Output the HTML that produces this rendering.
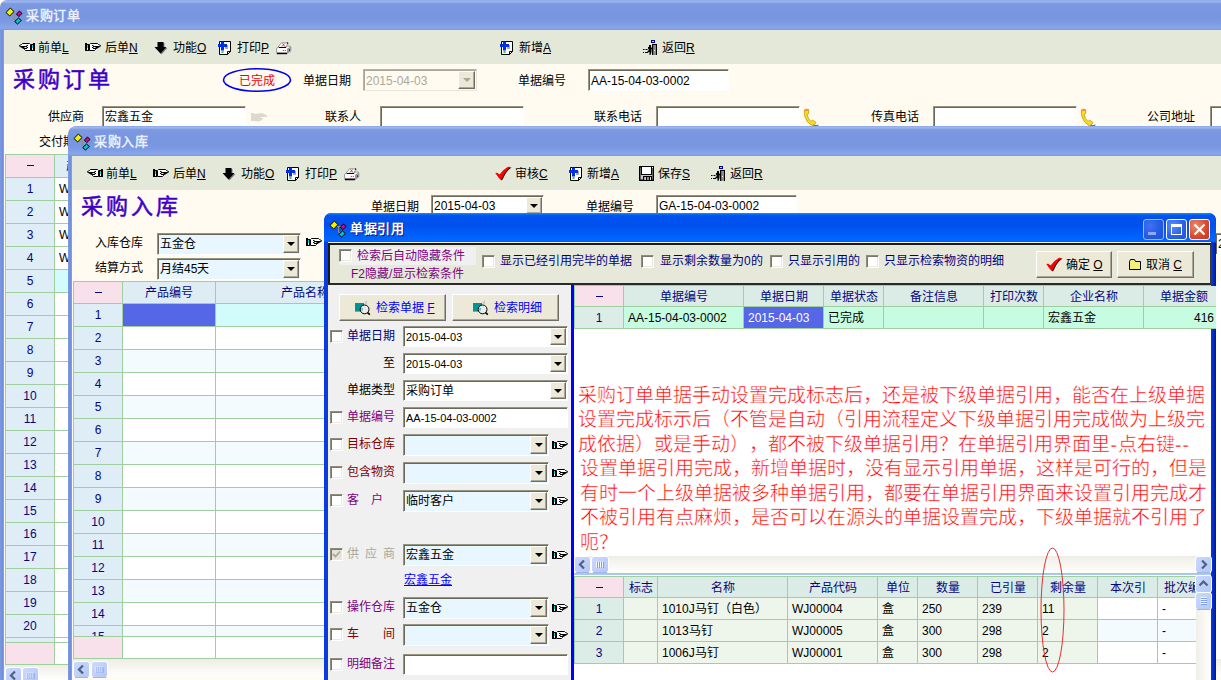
<!DOCTYPE html><html lang="zh-CN"><head><meta charset="utf-8"><title>UI</title><style>
*{box-sizing:border-box;margin:0;padding:0}
html,body{width:1221px;height:680px;overflow:hidden;background:#fffbf0}
body{position:relative;font-family:"Liberation Sans",sans-serif;font-size:12px;color:#000;line-height:14px}
.a{position:absolute}
.t{position:absolute;white-space:nowrap;line-height:14px;height:14px}
.u{text-decoration:underline}
.win{position:absolute;overflow:hidden}
.tb1{position:absolute;left:0;top:0;right:0;height:30px;background:linear-gradient(#7f9de4 0,#a3baee 1px,#98b1ea 2px,#7b98e1 4px,#7997e0 10px,#7896e0 18px,#7d9be3 23px,#84a2e8 26px,#86a5ea 28px,#7b99e2 30px)}
.ttl{position:absolute;color:#e8eefb;font-weight:bold;font-size:13px;white-space:nowrap;line-height:16px;letter-spacing:0.7px}
.tool{position:absolute;background:#e4e8d8}
.big{position:absolute;font-family:"Liberation Serif",serif;font-weight:normal;color:#3c00c8;font-size:22px;line-height:26px;white-space:nowrap;letter-spacing:3px;-webkit-text-stroke:0.5px #3c00c8}
.f{position:absolute;background:#fff;border:1px solid;border-color:#96937e #fff #fff #96937e;box-shadow:inset 1px 1px 0 #6a6859;white-space:nowrap;overflow:hidden;padding:3px 0 0 2px;line-height:14px}
.f.lb{background:#e8f6ff}
.f.dis{color:#aca899;box-shadow:inset 1px 1px 0 #a9a79a;border-color:#b5b3a5 #e8e6d8 #e8e6d8 #b5b3a5}
.dd{position:absolute;background:#ece9d8;border:1px solid;border-color:#fff #716f64 #716f64 #fff;box-shadow:inset -1px -1px 0 #aca899}
.dd:after{content:"";position:absolute;left:50%;top:50%;margin:-2px 0 0 -4px;border:4px solid transparent;border-top:4px solid #000;border-bottom:0}
.dd.dis:after{border-top-color:#aca899}
.cb{position:absolute;width:13px;height:13px;background:#fff;border:1px solid;border-color:#8f8d7c #fff #fff #8f8d7c;box-shadow:inset 1px 1px 0 #79776b,inset -1px -1px 0 #ece9d8}
.g{position:absolute;border-right:1px solid #9fcf9f;border-bottom:1px solid #9fcf9f;white-space:nowrap;overflow:hidden;line-height:14px}
.gh{background:#deedf3;color:#06067c;text-align:center}
.gn{background:#deedf6;color:#06067c;text-align:center}
.gp{background:#f8e1ea;color:#06067c;text-align:center}
.btn{position:absolute;background:#ece9d8;border:1px solid;border-color:#fff #716f64 #716f64 #fff;box-shadow:inset -1px -1px 0 #aca899}
.red{font-family:"Liberation Serif",serif;color:#ff0000;font-size:19px;line-height:24px;height:24px;font-weight:300;text-spacing-trim:space-all;-webkit-text-stroke:0.45px #fff}
.hy{display:inline-block;width:7.5px;text-align:center;font-weight:bold}
.sbtn{position:absolute;width:15px;height:17px;background:#c4d4fb;border:1px solid #fff;border-radius:3px;box-shadow:0 0 0 1px #b4c8f6 inset}
.s11{font-size:11px}
.dash{display:inline-block;width:7px;height:1px;background:#06067c;vertical-align:4px}

</style></head><body>
<div class="win" style="left:0;top:0;width:1221px;height:680px;background:#fffbf0">
<div class="tb1" style="border-top-left-radius:7px"></div>
<svg class="a" style="left:5px;top:7px" width="18" height="18" viewBox="0 0 18 18"><path d="M8 6.5 L12 6.5 M9.5 6.5 L9.5 12.5 L11.5 12.5" fill="none" stroke="#8c8c8c" stroke-width="1"/><path d="M1 5.5 L5.3 1 L9 4.5 L4.7 9 Z" fill="#f4f000" stroke="#000" stroke-width="1"/><path d="M11.4 7 L14.5 4 L17 6.5 L13.8 9.6 Z" fill="#e0008c" stroke="#000" stroke-width="1"/><path d="M9.7 14.5 L13.5 11 L16.4 13.5 L12.5 17 Z" fill="#00c8c8" stroke="#000" stroke-width="1"/></svg>
<div class="ttl" style="left:26px;top:8px">采购订单</div>
<div class="a" style="left:0px;top:30px;width:4px;height:650px;background:linear-gradient(90deg,#7d9be3,#6f8ddb 60%,#8aa4e6);"></div>
<div class="tool" style="left:4px;top:30px;width:1217px;height:34px"></div>
<svg class="a" style="left:18px;top:43px" width="17" height="9" viewBox="0 0 17 9"><g transform="translate(17,0) scale(-1,1)"><rect x="0" y="0" width="2" height="8" fill="#000"/><rect x="2" y="1" width="2" height="7" fill="#000"/><rect x="2" y="2" width="1" height="3" fill="#00e0f0"/><rect x="2" y="5" width="1" height="2" fill="#f4e8e8"/><path d="M4.5 1.5 L5.5 0.5 L12.5 0.5 L13.5 1.5 L15.5 2.5 L15.5 3.2 L13 4.5 L11.5 5.5 L10.5 6.5 L9.5 7.5 L4.5 7.5 Z" fill="#fff" stroke="#000" stroke-width="1"/><path d="M7 2.5 L8.5 2.5 M8 3.5 L14.5 3.5 M7 4.5 L8.5 4.5 M10.5 4.5 L13 4.5 M8 5.5 L11.5 5.5" fill="none" stroke="#000" stroke-width="1"/></g></svg>
<div class="t" style="left:38px;top:41px;">前单<span class="u">L</span></div>
<svg class="a" style="left:85px;top:43px" width="17" height="9" viewBox="0 0 17 9"><rect x="0" y="0" width="2" height="8" fill="#000"/><rect x="2" y="1" width="2" height="7" fill="#000"/><rect x="2" y="2" width="1" height="3" fill="#00e0f0"/><rect x="2" y="5" width="1" height="2" fill="#f4e8e8"/><path d="M4.5 1.5 L5.5 0.5 L12.5 0.5 L13.5 1.5 L15.5 2.5 L15.5 3.2 L13 4.5 L11.5 5.5 L10.5 6.5 L9.5 7.5 L4.5 7.5 Z" fill="#fff" stroke="#000" stroke-width="1"/><path d="M7 2.5 L8.5 2.5 M8 3.5 L14.5 3.5 M7 4.5 L8.5 4.5 M10.5 4.5 L13 4.5 M8 5.5 L11.5 5.5" fill="none" stroke="#000" stroke-width="1"/></svg>
<div class="t" style="left:105px;top:41px;">后单<span class="u">N</span></div>
<svg class="a" style="left:154px;top:42px" width="14" height="13" viewBox="0 0 14 13"><path d="M3.5 0 L9.5 0 L9.5 5 L12.5 5 L6.5 11.5 L0.5 5 L3.5 5 Z" fill="#808080" transform="translate(1,1)"/><path d="M3.5 0 L9.5 0 L9.5 5 L12.5 5 L6.5 11.5 L0.5 5 L3.5 5 Z" fill="#000"/></svg>
<div class="t" style="left:173px;top:41px;">功能<span class="u">O</span></div>
<svg class="a" style="left:218px;top:40px" width="14" height="16" viewBox="-1 0 14 16"><path d="M0.5 1.5 L11.5 1.5 L11.5 11.5 L8.5 14.5 L0.5 14.5 Z" fill="#fff" stroke="#000" stroke-width="1"/><path d="M8.5 14.5 L8.5 11.5 L11.5 11.5" fill="none" stroke="#000" stroke-width="1"/><rect x="6" y="5" width="3" height="4" fill="#a8a8a8"/><rect x="-1" y="4" width="9" height="3" fill="#0030e0"/><rect x="2" y="1.5" width="3" height="9" fill="#0030e0"/><rect x="2.5" y="11" width="2" height="2" fill="#30d030"/></svg>
<div class="t" style="left:237px;top:41px;">打印<span class="u">P</span></div>
<svg class="a" style="left:276px;top:42px" width="16" height="13" viewBox="0 0 16 13"><path d="M0.5 6.5 L3 4.6 L14 4 L14.8 5 L14.8 9 L11 11.5 L0.8 11.5 Z" fill="#fff" stroke="#808080" stroke-width="0.8"/><path d="M11 6.8 L14.8 4.6 L14.8 9 L11 11.5 Z" fill="#9a9a9a"/><path d="M1.8 5.4 L5.5 0.8 L11.5 0.8 L11.5 2 L9.8 5.4 Z" fill="#fff" stroke="#808080" stroke-width="0.8"/><path d="M11 0.8 L11.8 0.8 L11.8 2" stroke="#000" stroke-width="0.9" fill="none"/><path d="M5.8 4.6 L8.6 1.6 M6.6 1.6 L9 4.6" stroke="#e02020" stroke-width="0.9"/><path d="M3 5.5 L10.2 5.5" stroke="#000" stroke-width="1"/><path d="M1 11.4 L11 11.4" stroke="#000" stroke-width="1.6"/><rect x="6.8" y="8" width="1" height="1" fill="#f01010"/><rect x="8.8" y="8" width="1" height="1" fill="#f01010"/><rect x="13" y="7.5" width="1" height="1.2" fill="#000"/></svg>
<svg class="a" style="left:500px;top:40px" width="14" height="16" viewBox="-1 0 14 16"><path d="M0.5 1.5 L11.5 1.5 L11.5 11.5 L8.5 14.5 L0.5 14.5 Z" fill="#fff" stroke="#000" stroke-width="1"/><path d="M8.5 14.5 L8.5 11.5 L11.5 11.5" fill="none" stroke="#000" stroke-width="1"/><rect x="6" y="5" width="3" height="4" fill="#a8a8a8"/><rect x="-1" y="4" width="9" height="3" fill="#0030e0"/><rect x="2" y="1.5" width="3" height="9" fill="#0030e0"/><rect x="2.5" y="11" width="2" height="2" fill="#30d030"/></svg>
<div class="t" style="left:519px;top:41px;">新增<span class="u">A</span></div>
<svg class="a" style="left:643px;top:40px" width="15" height="16" viewBox="0 0 15 16"><rect x="8" y="0" width="4" height="3" fill="#000090"/><rect x="9" y="1" width="2" height="1" fill="#c8c8e8"/><rect x="9" y="4" width="5" height="11" fill="#000"/><rect x="10.2" y="5" width="2.8" height="10" fill="#8c8c8c"/><rect x="11" y="10" width="1" height="1" fill="#fff"/><rect x="6" y="5" width="2" height="2" fill="#000"/><path d="M5 7 L8.5 7 L8.5 12 L7.6 14.8 L6.4 14.8 L6.5 12 L4.5 12.6 L4.5 11 L6 10 L5 8.5 Z" fill="#000"/><rect x="8" y="8" width="2" height="1.2" fill="#000"/><rect x="0" y="9" width="1.5" height="1" fill="#000"/><rect x="2.5" y="9" width="2" height="1" fill="#000"/><rect x="0" y="12" width="1" height="1" fill="#000"/><rect x="2" y="12" width="3" height="1" fill="#000"/></svg>
<div class="t" style="left:662px;top:41px;">返回<span class="u">R</span></div>
<div class="big" style="left:13px;top:67px">采购订单</div>
<svg class="a" style="left:221px;top:67px" width="72" height="26" viewBox="0 0 72 26"><ellipse cx="36" cy="13" rx="33.5" ry="11.2" fill="none" stroke="#0000ee" stroke-width="1.6"/></svg>
<div class="t" style="left:239px;top:74px;color:#f00000">已完成</div>
<div class="t" style="left:303px;top:74px;">单据日期</div>
<div class="f dis" style="left:363px;top:69px;width:114px;height:22px;background:#fffbf0;padding-top:4px">2015-04-03</div>
<div class="dd dis" style="left:458px;top:71px;width:17px;height:18px"></div>
<div class="t" style="left:518px;top:74px;">单据编号</div>
<div class="f " style="left:588px;top:69px;width:141px;height:22px;padding-top:4px">AA-15-04-03-0002</div>
<div class="t" style="left:48px;top:110px;">供应商</div>
<div class="f " style="left:102px;top:106px;width:144px;height:22px;">宏鑫五金</div>
<svg class="a" style="left:250px;top:112px" width="18" height="11" viewBox="0 0 18 11"><path d="M1 1 L4 1 L4 2 L12 1 L17 3.5 L17 5 L11 5 L11 6 L13 6 L12 8 L9 9.5 L4 9 L1 9 Z" fill="#dcdad0"/></svg>
<div class="t" style="left:325px;top:110px;">联系人</div>
<div class="f " style="left:380px;top:106px;width:144px;height:22px;"></div>
<div class="t" style="left:594px;top:110px;">联系电话</div>
<div class="f " style="left:656px;top:106px;width:144px;height:22px;"></div>
<svg class="a" style="left:803px;top:108px" width="19" height="19" viewBox="0 0 19 19"><path d="M10 17.5 L15 17.5 L15 16.5" stroke="#707070" stroke-width="1" fill="none"/><path d="M1.5 2 Q3 0.8 5.5 1.5 L5.8 5.5 L4 6.5 Q5 11 8 13.5 L9.5 12 L13 14.5 Q12 17.5 9 17.5 Q4 15 2 9 Q1 5 1.5 2 Z" fill="#ffdc10" stroke="#b89828" stroke-width="0.8"/><path d="M1.5 2 Q3 0.8 5.5 1.5 L5.5 2.6 L1.6 3 Z" fill="#ff8030"/></svg>
<div class="t" style="left:871px;top:110px;">传真电话</div>
<div class="f " style="left:933px;top:106px;width:144px;height:22px;"></div>
<svg class="a" style="left:1080px;top:108px" width="19" height="19" viewBox="0 0 19 19"><path d="M10 17.5 L15 17.5 L15 16.5" stroke="#707070" stroke-width="1" fill="none"/><path d="M1.5 2 Q3 0.8 5.5 1.5 L5.8 5.5 L4 6.5 Q5 11 8 13.5 L9.5 12 L13 14.5 Q12 17.5 9 17.5 Q4 15 2 9 Q1 5 1.5 2 Z" fill="#ffdc10" stroke="#b89828" stroke-width="0.8"/><path d="M1.5 2 Q3 0.8 5.5 1.5 L5.5 2.6 L1.6 3 Z" fill="#ff8030"/></svg>
<div class="t" style="left:1147px;top:110px;">公司地址</div>
<div class="f " style="left:1210px;top:106px;width:30px;height:22px;"></div>
<div class="t" style="left:39px;top:135px;">交付期</div>
<div class="a" style="left:5px;top:154px;width:70px;height:511px;background:#9fcf9f;"></div>
<div class="g gp" style="left:6px;top:155px;width:49px;height:23px;padding-top:4px"><span class="dash"></span></div>
<div class="g gh" style="left:55px;top:155px;width:40px;height:23px;padding-top:4px;text-align:left;padding-left:11px">产</div>
<div class="g gn" style="left:6px;top:178px;width:49px;height:23px;padding-top:4px">1</div>
<div class="g " style="left:55px;top:178px;width:40px;height:23px;background:#fff;padding:4px 0 0 4px">W</div>
<div class="g gn" style="left:6px;top:201px;width:49px;height:23px;padding-top:4px">2</div>
<div class="g " style="left:55px;top:201px;width:40px;height:23px;background:#fff;padding:4px 0 0 4px">W</div>
<div class="g gn" style="left:6px;top:224px;width:49px;height:23px;padding-top:4px">3</div>
<div class="g " style="left:55px;top:224px;width:40px;height:23px;background:#fff;padding:4px 0 0 4px">W</div>
<div class="g gn" style="left:6px;top:247px;width:49px;height:23px;padding-top:4px">4</div>
<div class="g " style="left:55px;top:247px;width:40px;height:23px;background:#fff;padding:4px 0 0 4px">W</div>
<div class="g gn" style="left:6px;top:270px;width:49px;height:23px;padding-top:4px">5</div>
<div class="g " style="left:55px;top:270px;width:40px;height:23px;background:#d2fbfc;padding:4px 0 0 4px"></div>
<div class="g gn" style="left:6px;top:293px;width:49px;height:23px;padding-top:4px">6</div>
<div class="g " style="left:55px;top:293px;width:40px;height:23px;background:#fff;padding:4px 0 0 4px"></div>
<div class="g gn" style="left:6px;top:316px;width:49px;height:23px;padding-top:4px">7</div>
<div class="g " style="left:55px;top:316px;width:40px;height:23px;background:#fff;padding:4px 0 0 4px"></div>
<div class="g gn" style="left:6px;top:339px;width:49px;height:23px;padding-top:4px">8</div>
<div class="g " style="left:55px;top:339px;width:40px;height:23px;background:#fff;padding:4px 0 0 4px"></div>
<div class="g gn" style="left:6px;top:362px;width:49px;height:23px;padding-top:4px">9</div>
<div class="g " style="left:55px;top:362px;width:40px;height:23px;background:#fff;padding:4px 0 0 4px"></div>
<div class="g gn" style="left:6px;top:385px;width:49px;height:23px;padding-top:4px">10</div>
<div class="g " style="left:55px;top:385px;width:40px;height:23px;background:#fff;padding:4px 0 0 4px"></div>
<div class="g gn" style="left:6px;top:408px;width:49px;height:23px;padding-top:4px">11</div>
<div class="g " style="left:55px;top:408px;width:40px;height:23px;background:#fff;padding:4px 0 0 4px"></div>
<div class="g gn" style="left:6px;top:431px;width:49px;height:23px;padding-top:4px">12</div>
<div class="g " style="left:55px;top:431px;width:40px;height:23px;background:#fff;padding:4px 0 0 4px"></div>
<div class="g gn" style="left:6px;top:454px;width:49px;height:23px;padding-top:4px">13</div>
<div class="g " style="left:55px;top:454px;width:40px;height:23px;background:#fff;padding:4px 0 0 4px"></div>
<div class="g gn" style="left:6px;top:477px;width:49px;height:23px;padding-top:4px">14</div>
<div class="g " style="left:55px;top:477px;width:40px;height:23px;background:#fff;padding:4px 0 0 4px"></div>
<div class="g gn" style="left:6px;top:500px;width:49px;height:23px;padding-top:4px">15</div>
<div class="g " style="left:55px;top:500px;width:40px;height:23px;background:#fff;padding:4px 0 0 4px"></div>
<div class="g gn" style="left:6px;top:523px;width:49px;height:23px;padding-top:4px">16</div>
<div class="g " style="left:55px;top:523px;width:40px;height:23px;background:#fff;padding:4px 0 0 4px"></div>
<div class="g gn" style="left:6px;top:546px;width:49px;height:23px;padding-top:4px">17</div>
<div class="g " style="left:55px;top:546px;width:40px;height:23px;background:#fff;padding:4px 0 0 4px"></div>
<div class="g gn" style="left:6px;top:569px;width:49px;height:23px;padding-top:4px">18</div>
<div class="g " style="left:55px;top:569px;width:40px;height:23px;background:#fff;padding:4px 0 0 4px"></div>
<div class="g gn" style="left:6px;top:592px;width:49px;height:23px;padding-top:4px">19</div>
<div class="g " style="left:55px;top:592px;width:40px;height:23px;background:#fff;padding:4px 0 0 4px"></div>
<div class="g gn" style="left:6px;top:615px;width:49px;height:23px;padding-top:4px">20</div>
<div class="g " style="left:55px;top:615px;width:40px;height:23px;background:#fff;padding:4px 0 0 4px"></div>
<div class="g gn" style="left:6px;top:638px;width:49px;height:5px;"></div>
<div class="g " style="left:55px;top:638px;width:40px;height:5px;background:#fff"></div>
<div class="g gp" style="left:6px;top:643px;width:49px;height:22px;"></div>
<div class="g " style="left:55px;top:643px;width:40px;height:22px;background:#fff"></div>
<div class="a" style="left:4px;top:665px;width:70px;height:15px;background:linear-gradient(#eeede5,#f6f5f0 40%,#fefefb);"></div>
<svg class="a" style="left:5px;top:667px" width="17" height="17" viewBox="0 0 17 17"><defs><linearGradient id="sg" x1="0" y1="0" x2="1" y2="1"><stop offset="0" stop-color="#cddafd"/><stop offset="1" stop-color="#b4c6f5"/></linearGradient></defs><rect x="0.5" y="0.5" width="16" height="16" rx="2.5" fill="url(#sg)" stroke="#fff" stroke-width="1"/><path d="M2 16.5 L15 16.5" stroke="#a0b5ee" stroke-width="1"/><path d="M10.0 4.5 L6.0 8.5 L10.0 12.5" fill="none" stroke="#4d6185" stroke-width="2.2"/></svg>
<svg class="a" style="left:22px;top:667px" width="17" height="17" viewBox="0 0 17 17"><defs><linearGradient id="sg" x1="0" y1="0" x2="1" y2="1"><stop offset="0" stop-color="#cddafd"/><stop offset="1" stop-color="#b4c6f5"/></linearGradient></defs><rect x="0.5" y="0.5" width="16" height="16" rx="2.5" fill="url(#sg)" stroke="#fff" stroke-width="1"/><path d="M2 16.5 L15 16.5" stroke="#a0b5ee" stroke-width="1"/><rect x="4.5" y="5.5" width="1" height="6" fill="#f4f8ff"/><rect x="5.5" y="6.0" width="1" height="6" fill="#7c9eec"/><rect x="6.5" y="5.5" width="1" height="6" fill="#f4f8ff"/><rect x="7.5" y="6.0" width="1" height="6" fill="#7c9eec"/><rect x="8.5" y="5.5" width="1" height="6" fill="#f4f8ff"/><rect x="9.5" y="6.0" width="1" height="6" fill="#7c9eec"/><rect x="10.5" y="5.5" width="1" height="6" fill="#f4f8ff"/><rect x="11.5" y="6.0" width="1" height="6" fill="#7c9eec"/></svg>
</div>
<div class="win" style="left:68px;top:126px;width:1160px;height:560px;background:#fffbf0;border-top-left-radius:8px">
<div class="tb1" style="border-top-left-radius:7px"></div>
<svg class="a" style="left:5px;top:7px" width="18" height="18" viewBox="0 0 18 18"><path d="M8 6.5 L12 6.5 M9.5 6.5 L9.5 12.5 L11.5 12.5" fill="none" stroke="#8c8c8c" stroke-width="1"/><path d="M1 5.5 L5.3 1 L9 4.5 L4.7 9 Z" fill="#f4f000" stroke="#000" stroke-width="1"/><path d="M11.4 7 L14.5 4 L17 6.5 L13.8 9.6 Z" fill="#e0008c" stroke="#000" stroke-width="1"/><path d="M9.7 14.5 L13.5 11 L16.4 13.5 L12.5 17 Z" fill="#00c8c8" stroke="#000" stroke-width="1"/></svg>
<div class="ttl" style="left:26px;top:8px">采购入库</div>
<div class="a" style="left:0px;top:30px;width:4px;height:650px;background:linear-gradient(90deg,#7d9be3,#6f8ddb 60%,#8aa4e6);"></div>
<div class="tool" style="left:4px;top:30px;width:1217px;height:34px"></div>
<svg class="a" style="left:18px;top:43px" width="17" height="9" viewBox="0 0 17 9"><g transform="translate(17,0) scale(-1,1)"><rect x="0" y="0" width="2" height="8" fill="#000"/><rect x="2" y="1" width="2" height="7" fill="#000"/><rect x="2" y="2" width="1" height="3" fill="#00e0f0"/><rect x="2" y="5" width="1" height="2" fill="#f4e8e8"/><path d="M4.5 1.5 L5.5 0.5 L12.5 0.5 L13.5 1.5 L15.5 2.5 L15.5 3.2 L13 4.5 L11.5 5.5 L10.5 6.5 L9.5 7.5 L4.5 7.5 Z" fill="#fff" stroke="#000" stroke-width="1"/><path d="M7 2.5 L8.5 2.5 M8 3.5 L14.5 3.5 M7 4.5 L8.5 4.5 M10.5 4.5 L13 4.5 M8 5.5 L11.5 5.5" fill="none" stroke="#000" stroke-width="1"/></g></svg>
<div class="t" style="left:38px;top:41px;">前单<span class="u">L</span></div>
<svg class="a" style="left:85px;top:43px" width="17" height="9" viewBox="0 0 17 9"><rect x="0" y="0" width="2" height="8" fill="#000"/><rect x="2" y="1" width="2" height="7" fill="#000"/><rect x="2" y="2" width="1" height="3" fill="#00e0f0"/><rect x="2" y="5" width="1" height="2" fill="#f4e8e8"/><path d="M4.5 1.5 L5.5 0.5 L12.5 0.5 L13.5 1.5 L15.5 2.5 L15.5 3.2 L13 4.5 L11.5 5.5 L10.5 6.5 L9.5 7.5 L4.5 7.5 Z" fill="#fff" stroke="#000" stroke-width="1"/><path d="M7 2.5 L8.5 2.5 M8 3.5 L14.5 3.5 M7 4.5 L8.5 4.5 M10.5 4.5 L13 4.5 M8 5.5 L11.5 5.5" fill="none" stroke="#000" stroke-width="1"/></svg>
<div class="t" style="left:105px;top:41px;">后单<span class="u">N</span></div>
<svg class="a" style="left:154px;top:42px" width="14" height="13" viewBox="0 0 14 13"><path d="M3.5 0 L9.5 0 L9.5 5 L12.5 5 L6.5 11.5 L0.5 5 L3.5 5 Z" fill="#808080" transform="translate(1,1)"/><path d="M3.5 0 L9.5 0 L9.5 5 L12.5 5 L6.5 11.5 L0.5 5 L3.5 5 Z" fill="#000"/></svg>
<div class="t" style="left:173px;top:41px;">功能<span class="u">O</span></div>
<svg class="a" style="left:218px;top:40px" width="14" height="16" viewBox="-1 0 14 16"><path d="M0.5 1.5 L11.5 1.5 L11.5 11.5 L8.5 14.5 L0.5 14.5 Z" fill="#fff" stroke="#000" stroke-width="1"/><path d="M8.5 14.5 L8.5 11.5 L11.5 11.5" fill="none" stroke="#000" stroke-width="1"/><rect x="6" y="5" width="3" height="4" fill="#a8a8a8"/><rect x="-1" y="4" width="9" height="3" fill="#0030e0"/><rect x="2" y="1.5" width="3" height="9" fill="#0030e0"/><rect x="2.5" y="11" width="2" height="2" fill="#30d030"/></svg>
<div class="t" style="left:237px;top:41px;">打印<span class="u">P</span></div>
<svg class="a" style="left:276px;top:42px" width="16" height="13" viewBox="0 0 16 13"><path d="M0.5 6.5 L3 4.6 L14 4 L14.8 5 L14.8 9 L11 11.5 L0.8 11.5 Z" fill="#fff" stroke="#808080" stroke-width="0.8"/><path d="M11 6.8 L14.8 4.6 L14.8 9 L11 11.5 Z" fill="#9a9a9a"/><path d="M1.8 5.4 L5.5 0.8 L11.5 0.8 L11.5 2 L9.8 5.4 Z" fill="#fff" stroke="#808080" stroke-width="0.8"/><path d="M11 0.8 L11.8 0.8 L11.8 2" stroke="#000" stroke-width="0.9" fill="none"/><path d="M5.8 4.6 L8.6 1.6 M6.6 1.6 L9 4.6" stroke="#e02020" stroke-width="0.9"/><path d="M3 5.5 L10.2 5.5" stroke="#000" stroke-width="1"/><path d="M1 11.4 L11 11.4" stroke="#000" stroke-width="1.6"/><rect x="6.8" y="8" width="1" height="1" fill="#f01010"/><rect x="8.8" y="8" width="1" height="1" fill="#f01010"/><rect x="13" y="7.5" width="1" height="1.2" fill="#000"/></svg>
<svg class="a" style="left:427px;top:40px" width="17" height="16" viewBox="0 0 17 16"><path d="M0.2 7 L2 6.8 L4.5 8.6 L8.5 4 L13 0.8 L15.8 1 L12.5 3.5 L9.5 7.5 L7 12.5 L6 14 L3.5 11.5 L1.5 8.5 Z" fill="#000" transform="translate(0.8,0.6)"/><path d="M0.2 7 L2 6.8 L4.5 8.6 L8.5 4 L13 0.8 L15.8 1 L12.5 3.5 L9.5 7.5 L7 12.5 L6 14 L3.5 11.5 L1.5 8.5 Z" fill="#ff0000"/></svg>
<div class="t" style="left:447px;top:41px;">审核<span class="u">C</span></div>
<svg class="a" style="left:501px;top:40px" width="14" height="16" viewBox="-1 0 14 16"><path d="M0.5 1.5 L11.5 1.5 L11.5 11.5 L8.5 14.5 L0.5 14.5 Z" fill="#fff" stroke="#000" stroke-width="1"/><path d="M8.5 14.5 L8.5 11.5 L11.5 11.5" fill="none" stroke="#000" stroke-width="1"/><rect x="6" y="5" width="3" height="4" fill="#a8a8a8"/><rect x="-1" y="4" width="9" height="3" fill="#0030e0"/><rect x="2" y="1.5" width="3" height="9" fill="#0030e0"/><rect x="2.5" y="11" width="2" height="2" fill="#30d030"/></svg>
<div class="t" style="left:519px;top:41px;">新增<span class="u">A</span></div>
<svg class="a" style="left:571px;top:40px" width="15" height="15" viewBox="0 0 15 15"><rect x="0.75" y="0.75" width="13.5" height="13.5" fill="#c8c8c8" stroke="#000" stroke-width="1.5"/><rect x="2.5" y="0.5" width="10" height="8" fill="#fff" stroke="#000" stroke-width="1"/><rect x="4" y="10" width="9" height="4.5" fill="#000"/><rect x="5.3" y="11" width="1.6" height="3" fill="#e0e0e0"/><rect x="8" y="11" width="2" height="3" fill="#909090"/><rect x="11" y="11" width="1" height="3" fill="#e0e0e0"/><rect x="13" y="1" width="1" height="1" fill="#fff"/></svg>
<div class="t" style="left:590px;top:41px;">保存<span class="u">S</span></div>
<svg class="a" style="left:643px;top:40px" width="15" height="16" viewBox="0 0 15 16"><rect x="8" y="0" width="4" height="3" fill="#000090"/><rect x="9" y="1" width="2" height="1" fill="#c8c8e8"/><rect x="9" y="4" width="5" height="11" fill="#000"/><rect x="10.2" y="5" width="2.8" height="10" fill="#8c8c8c"/><rect x="11" y="10" width="1" height="1" fill="#fff"/><rect x="6" y="5" width="2" height="2" fill="#000"/><path d="M5 7 L8.5 7 L8.5 12 L7.6 14.8 L6.4 14.8 L6.5 12 L4.5 12.6 L4.5 11 L6 10 L5 8.5 Z" fill="#000"/><rect x="8" y="8" width="2" height="1.2" fill="#000"/><rect x="0" y="9" width="1.5" height="1" fill="#000"/><rect x="2.5" y="9" width="2" height="1" fill="#000"/><rect x="0" y="12" width="1" height="1" fill="#000"/><rect x="2" y="12" width="3" height="1" fill="#000"/></svg>
<div class="t" style="left:662px;top:41px;">返回<span class="u">R</span></div>
<div class="big" style="left:13px;top:68px">采购入库</div>
<div class="t" style="left:303px;top:74px;">单据日期</div>
<div class="f " style="left:363px;top:69px;width:113px;height:21px;">2015-04-03</div>
<div class="dd " style="left:458px;top:71px;width:16px;height:17px"></div>
<div class="t" style="left:518px;top:74px;">单据编号</div>
<div class="f " style="left:588px;top:69px;width:141px;height:21px;">GA-15-04-03-0002</div>
<div class="t" style="left:27px;top:110px;">入库仓库</div>
<div class="f lb" style="left:89px;top:107px;width:144px;height:22px;">五金仓</div>
<div class="dd " style="left:215px;top:109px;width:16px;height:18px"></div>
<svg class="a" style="left:238px;top:112px" width="17" height="9" viewBox="0 0 17 9"><rect x="0" y="0" width="2" height="8" fill="#000"/><rect x="2" y="1" width="2" height="7" fill="#000"/><rect x="2" y="2" width="1" height="3" fill="#00e0f0"/><rect x="2" y="5" width="1" height="2" fill="#f4e8e8"/><path d="M4.5 1.5 L5.5 0.5 L12.5 0.5 L13.5 1.5 L15.5 2.5 L15.5 3.2 L13 4.5 L11.5 5.5 L10.5 6.5 L9.5 7.5 L4.5 7.5 Z" fill="#fff" stroke="#000" stroke-width="1"/><path d="M7 2.5 L8.5 2.5 M8 3.5 L14.5 3.5 M7 4.5 L8.5 4.5 M10.5 4.5 L13 4.5 M8 5.5 L11.5 5.5" fill="none" stroke="#000" stroke-width="1"/></svg>
<div class="t" style="left:27px;top:135px;">结算方式</div>
<div class="f lb" style="left:89px;top:132px;width:144px;height:22px;">月结45天</div>
<div class="dd " style="left:215px;top:134px;width:16px;height:18px"></div>
<div class="f " style="left:1147px;top:107px;width:40px;height:22px;">2</div>
<div class="a" style="left:5px;top:155px;width:1200px;height:378px;background:#fff;"></div>
<div class="a" style="left:5px;top:155px;width:444px;height:378px;background:#9fcf9f;"></div>
<div class="g gp" style="left:6px;top:156px;width:49px;height:22px;padding-top:4px"><span class="dash"></span></div>
<div class="g gh" style="left:55px;top:156px;width:93px;height:22px;padding-top:4px">产品编号</div>
<div class="g gh" style="left:148px;top:156px;width:300px;height:22px;padding-top:4px;text-align:left;padding-left:65px">产品名称</div>
<div class="g gn" style="left:6px;top:178px;width:49px;height:23px;padding-top:4px">1</div>
<div class="g " style="left:55px;top:178px;width:93px;height:23px;background:#5566e6"></div>
<div class="g " style="left:148px;top:178px;width:300px;height:23px;background:#d2fbfc"></div>
<div class="g gn" style="left:6px;top:201px;width:49px;height:23px;padding-top:4px">2</div>
<div class="g " style="left:55px;top:201px;width:93px;height:23px;background:#fff"></div>
<div class="g " style="left:148px;top:201px;width:300px;height:23px;background:#fff"></div>
<div class="g gn" style="left:6px;top:224px;width:49px;height:23px;padding-top:4px">3</div>
<div class="g " style="left:55px;top:224px;width:93px;height:23px;background:#f4fbfe"></div>
<div class="g " style="left:148px;top:224px;width:300px;height:23px;background:#f4fbfe"></div>
<div class="g gn" style="left:6px;top:247px;width:49px;height:23px;padding-top:4px">4</div>
<div class="g " style="left:55px;top:247px;width:93px;height:23px;background:#fff"></div>
<div class="g " style="left:148px;top:247px;width:300px;height:23px;background:#fff"></div>
<div class="g gn" style="left:6px;top:270px;width:49px;height:23px;padding-top:4px">5</div>
<div class="g " style="left:55px;top:270px;width:93px;height:23px;background:#f4fbfe"></div>
<div class="g " style="left:148px;top:270px;width:300px;height:23px;background:#f4fbfe"></div>
<div class="g gn" style="left:6px;top:293px;width:49px;height:23px;padding-top:4px">6</div>
<div class="g " style="left:55px;top:293px;width:93px;height:23px;background:#fff"></div>
<div class="g " style="left:148px;top:293px;width:300px;height:23px;background:#fff"></div>
<div class="g gn" style="left:6px;top:316px;width:49px;height:23px;padding-top:4px">7</div>
<div class="g " style="left:55px;top:316px;width:93px;height:23px;background:#f4fbfe"></div>
<div class="g " style="left:148px;top:316px;width:300px;height:23px;background:#f4fbfe"></div>
<div class="g gn" style="left:6px;top:339px;width:49px;height:23px;padding-top:4px">8</div>
<div class="g " style="left:55px;top:339px;width:93px;height:23px;background:#fff"></div>
<div class="g " style="left:148px;top:339px;width:300px;height:23px;background:#fff"></div>
<div class="g gn" style="left:6px;top:362px;width:49px;height:23px;padding-top:4px">9</div>
<div class="g " style="left:55px;top:362px;width:93px;height:23px;background:#f4fbfe"></div>
<div class="g " style="left:148px;top:362px;width:300px;height:23px;background:#f4fbfe"></div>
<div class="g gn" style="left:6px;top:385px;width:49px;height:23px;padding-top:4px">10</div>
<div class="g " style="left:55px;top:385px;width:93px;height:23px;background:#fff"></div>
<div class="g " style="left:148px;top:385px;width:300px;height:23px;background:#fff"></div>
<div class="g gn" style="left:6px;top:408px;width:49px;height:23px;padding-top:4px">11</div>
<div class="g " style="left:55px;top:408px;width:93px;height:23px;background:#f4fbfe"></div>
<div class="g " style="left:148px;top:408px;width:300px;height:23px;background:#f4fbfe"></div>
<div class="g gn" style="left:6px;top:431px;width:49px;height:23px;padding-top:4px">12</div>
<div class="g " style="left:55px;top:431px;width:93px;height:23px;background:#fff"></div>
<div class="g " style="left:148px;top:431px;width:300px;height:23px;background:#fff"></div>
<div class="g gn" style="left:6px;top:454px;width:49px;height:23px;padding-top:4px">13</div>
<div class="g " style="left:55px;top:454px;width:93px;height:23px;background:#f4fbfe"></div>
<div class="g " style="left:148px;top:454px;width:300px;height:23px;background:#f4fbfe"></div>
<div class="g gn" style="left:6px;top:477px;width:49px;height:23px;padding-top:4px">14</div>
<div class="g " style="left:55px;top:477px;width:93px;height:23px;background:#fff"></div>
<div class="g " style="left:148px;top:477px;width:300px;height:23px;background:#fff"></div>
<div class="g gn" style="left:6px;top:500px;width:49px;height:23px;padding-top:4px">15</div>
<div class="g " style="left:55px;top:500px;width:93px;height:23px;background:#f4fbfe"></div>
<div class="g " style="left:148px;top:500px;width:300px;height:23px;background:#f4fbfe"></div>
<div class="g gp" style="left:6px;top:510px;width:49px;height:23px;border-top:1px solid #9fcf9f"></div>
<div class="g " style="left:55px;top:510px;width:93px;height:23px;background:#fff;border-top:1px solid #9fcf9f"></div>
<div class="g " style="left:148px;top:510px;width:300px;height:23px;background:#fff;border-top:1px solid #9fcf9f"></div>
<div class="a" style="left:4px;top:533px;width:1200px;height:18px;background:linear-gradient(#eeede5,#f6f5f0 8px,#fefefb 17px);"></div>
<svg class="a" style="left:5px;top:535px" width="17" height="17" viewBox="0 0 17 17"><defs><linearGradient id="sg" x1="0" y1="0" x2="1" y2="1"><stop offset="0" stop-color="#cddafd"/><stop offset="1" stop-color="#b4c6f5"/></linearGradient></defs><rect x="0.5" y="0.5" width="16" height="16" rx="2.5" fill="url(#sg)" stroke="#fff" stroke-width="1"/><path d="M2 16.5 L15 16.5" stroke="#a0b5ee" stroke-width="1"/><path d="M10.0 4.5 L6.0 8.5 L10.0 12.5" fill="none" stroke="#4d6185" stroke-width="2.2"/></svg>
<svg class="a" style="left:23px;top:535px" width="17" height="17" viewBox="0 0 17 17"><defs><linearGradient id="sg" x1="0" y1="0" x2="1" y2="1"><stop offset="0" stop-color="#cddafd"/><stop offset="1" stop-color="#b4c6f5"/></linearGradient></defs><rect x="0.5" y="0.5" width="16" height="16" rx="2.5" fill="url(#sg)" stroke="#fff" stroke-width="1"/><path d="M2 16.5 L15 16.5" stroke="#a0b5ee" stroke-width="1"/><rect x="4.5" y="5.5" width="1" height="6" fill="#f4f8ff"/><rect x="5.5" y="6.0" width="1" height="6" fill="#7c9eec"/><rect x="6.5" y="5.5" width="1" height="6" fill="#f4f8ff"/><rect x="7.5" y="6.0" width="1" height="6" fill="#7c9eec"/><rect x="8.5" y="5.5" width="1" height="6" fill="#f4f8ff"/><rect x="9.5" y="6.0" width="1" height="6" fill="#7c9eec"/><rect x="10.5" y="5.5" width="1" height="6" fill="#f4f8ff"/><rect x="11.5" y="6.0" width="1" height="6" fill="#7c9eec"/></svg>
</div>
<div class="win" style="left:324px;top:213px;width:892px;height:480px;background:linear-gradient(90deg,#0a3ce0 0,#0838dc 885px,#0834d8 888px,#0028b8 890px,#001a90 892px);border-radius:7px 7px 0 0">
<div class="a" style="left:0;top:0;width:892px;height:30px;border-radius:8px 8px 0 0;background:linear-gradient(#0997ff 0,#0053ee 8%,#0050ee 40%,#0066ff 88%,#0066ff 93%,#005bff 95%,#003dd7 96%,#003dd7 100%)"></div>
<svg class="a" style="left:5px;top:7px" width="18" height="18" viewBox="0 0 18 18"><path d="M8 6.5 L12 6.5 M9.5 6.5 L9.5 12.5 L11.5 12.5" fill="none" stroke="#8c8c8c" stroke-width="1"/><path d="M1 5.5 L5.3 1 L9 4.5 L4.7 9 Z" fill="#f4f000" stroke="#000" stroke-width="1"/><path d="M11.4 7 L14.5 4 L17 6.5 L13.8 9.6 Z" fill="#e0008c" stroke="#000" stroke-width="1"/><path d="M9.7 14.5 L13.5 11 L16.4 13.5 L12.5 17 Z" fill="#00c8c8" stroke="#000" stroke-width="1"/></svg>
<div class="ttl" style="left:26px;top:8px;color:#fff;text-shadow:1px 1px #0f1089">单据引用</div>
<div class="a" style="left:819px;top:6px;width:21px;height:21px;border:1px solid #9db6f4;border-radius:3px;background:radial-gradient(circle at 30% 30%,#3f72f2,#2458e4 60%,#2050d8)"></div>
<div class="a" style="left:842px;top:6px;width:21px;height:21px;border:1px solid #fff;border-radius:3px;background:radial-gradient(circle at 30% 30%,#5c8cf6,#2a5fe6 60%,#2353d6)"></div>
<div class="a" style="left:865px;top:6px;width:21px;height:21px;border:1px solid #fff;border-radius:3px;background:radial-gradient(circle at 30% 30%,#ec8a6c,#d8482a 60%,#c03a1c)"></div>
<div class="a" style="left:824px;top:19px;width:8px;height:3px;background:#8ca8f0;"></div>
<div class="a" style="left:847px;top:11px;width:11px;height:11px;border:1px solid #fff;border-top-width:3px"></div>
<svg class="a" style="left:869px;top:10px" width="13" height="13" viewBox="0 0 13 13"><path d="M1.5 1.5 L11.5 11.5 M11.5 1.5 L1.5 11.5" stroke="#fff" stroke-width="2.2"/></svg>
<div class="a" style="left:4px;top:29px;width:883px;height:460px;background:#f0f0f0"></div>
<div class="a" style="left:4px;top:30px;width:883px;height:42px;background:#e6e8da;border:2px solid #1a1a1a;border-right:1px solid #3a3a36;border-bottom-color:#2a2a2a"></div>
<div class="a" style="left:15px;top:34px;width:137px;height:18px;background:#f0f0f0;"></div>
<div class="cb" style="left:15px;top:36px;"></div>
<div class="t" style="left:33px;top:36px;color:#800080">检索后自动隐藏条件</div>
<div class="t" style="left:27px;top:54px;color:#800080">F2隐藏/显示检索条件</div>
<div class="cb" style="left:158px;top:42px;"></div>
<div class="t" style="left:176px;top:41px;color:#000080">显示已经引用完毕的单据</div>
<div class="cb" style="left:317px;top:42px;"></div>
<div class="t" style="left:336px;top:41px;color:#000080">显示剩余数量为0的</div>
<div class="cb" style="left:446px;top:42px;"></div>
<div class="t" style="left:464px;top:41px;color:#000080">只显示引用的</div>
<div class="cb" style="left:542px;top:42px;"></div>
<div class="t" style="left:560px;top:41px;color:#000080">只显示检索物资的明细</div>
<div class="btn" style="left:712px;top:38px;width:76px;height:27px"></div>
<svg class="a" style="left:722px;top:44px" width="17" height="16" viewBox="0 0 17 16"><path d="M0.2 7 L2 6.8 L4.5 8.6 L8.5 4 L13 0.8 L15.8 1 L12.5 3.5 L9.5 7.5 L7 12.5 L6 14 L3.5 11.5 L1.5 8.5 Z" fill="#000" transform="translate(0.8,0.6)"/><path d="M0.2 7 L2 6.8 L4.5 8.6 L8.5 4 L13 0.8 L15.8 1 L12.5 3.5 L9.5 7.5 L7 12.5 L6 14 L3.5 11.5 L1.5 8.5 Z" fill="#ff0000"/></svg>
<div class="t" style="left:742px;top:45px;">确定 <span class="u">O</span></div>
<div class="btn" style="left:793px;top:38px;width:77px;height:27px"></div>
<svg class="a" style="left:805px;top:46px" width="12" height="11" viewBox="0 0 12 11"><path d="M0.5 2.5 L1.5 0.5 L5.5 0.5 L6.5 2.5 L11.5 2.5 L11.5 10.5 L0.5 10.5 Z" fill="#f4f078" stroke="#000" stroke-width="1"/></svg>
<div class="t" style="left:822px;top:45px;">取消 <span class="u">C</span></div>
<div class="btn" style="left:15px;top:81px;width:107px;height:27px"></div>
<svg class="a" style="left:30px;top:87px" width="18" height="16" viewBox="0 0 18 16"><path d="M10 3.2 L13 0 L13 4 Z" fill="#c4c4cc"/><rect x="1" y="3" width="9" height="8.6" fill="#009494"/><circle cx="10.6" cy="9.4" r="4.4" fill="#ebebeb" stroke="#000" stroke-width="1"/><path d="M7.2 8 L9 8 L9 10.6 L7.2 10.6 Z" fill="#30a8a8" opacity="0.7"/><path d="M13.6 12.6 L15.8 14.6" stroke="#000" stroke-width="1.8"/></svg>
<div class="t" style="left:52px;top:88px;color:#0000ff">检索单据 <span class="u">F</span></div>
<div class="btn" style="left:128px;top:81px;width:107px;height:27px"></div>
<svg class="a" style="left:148px;top:87px" width="18" height="16" viewBox="0 0 18 16"><path d="M10 3.2 L13 0 L13 4 Z" fill="#c4c4cc"/><rect x="1" y="3" width="9" height="8.6" fill="#009494"/><circle cx="10.6" cy="9.4" r="4.4" fill="#ebebeb" stroke="#000" stroke-width="1"/><path d="M7.2 8 L9 8 L9 10.6 L7.2 10.6 Z" fill="#30a8a8" opacity="0.7"/><path d="M13.6 12.6 L15.8 14.6" stroke="#000" stroke-width="1.8"/></svg>
<div class="t" style="left:170px;top:88px;color:#0000ff">检索明细</div>
<div class="cb" style="left:6px;top:117px;"></div>
<div class="t" style="left:23px;top:116px;color:#000080">单据日期</div>
<div class="f  s11" style="left:79px;top:113px;width:165px;height:21px;">2015-04-03</div>
<div class="dd " style="left:226px;top:115px;width:16px;height:17px"></div>
<div class="t" style="left:59px;top:143px;color:#000">至</div>
<div class="f  s11" style="left:79px;top:140px;width:165px;height:21px;">2015-04-03</div>
<div class="dd " style="left:226px;top:142px;width:16px;height:17px"></div>
<div class="t" style="left:23px;top:170px;color:#000">单据类型</div>
<div class="f " style="left:79px;top:167px;width:165px;height:21px;">采购订单</div>
<div class="dd " style="left:226px;top:169px;width:16px;height:17px"></div>
<div class="cb" style="left:6px;top:198px;"></div>
<div class="t" style="left:23px;top:197px;color:#800080">单据编号</div>
<div class="f  s11" style="left:79px;top:194px;width:165px;height:21px;">AA-15-04-03-0002</div>
<div class="cb" style="left:6px;top:225px;"></div>
<div class="t" style="left:23px;top:224px;color:#800000">目标仓库</div>
<div class="f lb" style="left:79px;top:221px;width:146px;height:22px;"></div>
<div class="dd " style="left:206px;top:223px;width:17px;height:18px"></div>
<svg class="a" style="left:228px;top:228px" width="17" height="9" viewBox="0 0 17 9"><rect x="0" y="0" width="2" height="8" fill="#000"/><rect x="2" y="1" width="2" height="7" fill="#000"/><rect x="2" y="2" width="1" height="3" fill="#00e0f0"/><rect x="2" y="5" width="1" height="2" fill="#f4e8e8"/><path d="M4.5 1.5 L5.5 0.5 L12.5 0.5 L13.5 1.5 L15.5 2.5 L15.5 3.2 L13 4.5 L11.5 5.5 L10.5 6.5 L9.5 7.5 L4.5 7.5 Z" fill="#fff" stroke="#000" stroke-width="1"/><path d="M7 2.5 L8.5 2.5 M8 3.5 L14.5 3.5 M7 4.5 L8.5 4.5 M10.5 4.5 L13 4.5 M8 5.5 L11.5 5.5" fill="none" stroke="#000" stroke-width="1"/></svg>
<div class="cb" style="left:6px;top:253px;"></div>
<div class="t" style="left:23px;top:252px;color:#800000">包含物资</div>
<div class="f lb" style="left:79px;top:249px;width:146px;height:22px;"></div>
<div class="dd " style="left:206px;top:251px;width:17px;height:18px"></div>
<svg class="a" style="left:228px;top:256px" width="17" height="9" viewBox="0 0 17 9"><rect x="0" y="0" width="2" height="8" fill="#000"/><rect x="2" y="1" width="2" height="7" fill="#000"/><rect x="2" y="2" width="1" height="3" fill="#00e0f0"/><rect x="2" y="5" width="1" height="2" fill="#f4e8e8"/><path d="M4.5 1.5 L5.5 0.5 L12.5 0.5 L13.5 1.5 L15.5 2.5 L15.5 3.2 L13 4.5 L11.5 5.5 L10.5 6.5 L9.5 7.5 L4.5 7.5 Z" fill="#fff" stroke="#000" stroke-width="1"/><path d="M7 2.5 L8.5 2.5 M8 3.5 L14.5 3.5 M7 4.5 L8.5 4.5 M10.5 4.5 L13 4.5 M8 5.5 L11.5 5.5" fill="none" stroke="#000" stroke-width="1"/></svg>
<div class="cb" style="left:6px;top:281px;"></div>
<div class="t" style="left:23px;top:280px;color:#800080"><span style="letter-spacing:12px">客户</span></div>
<div class="f lb" style="left:79px;top:277px;width:146px;height:22px;">临时客户</div>
<div class="dd " style="left:206px;top:279px;width:17px;height:18px"></div>
<svg class="a" style="left:228px;top:284px" width="17" height="9" viewBox="0 0 17 9"><rect x="0" y="0" width="2" height="8" fill="#000"/><rect x="2" y="1" width="2" height="7" fill="#000"/><rect x="2" y="2" width="1" height="3" fill="#00e0f0"/><rect x="2" y="5" width="1" height="2" fill="#f4e8e8"/><path d="M4.5 1.5 L5.5 0.5 L12.5 0.5 L13.5 1.5 L15.5 2.5 L15.5 3.2 L13 4.5 L11.5 5.5 L10.5 6.5 L9.5 7.5 L4.5 7.5 Z" fill="#fff" stroke="#000" stroke-width="1"/><path d="M7 2.5 L8.5 2.5 M8 3.5 L14.5 3.5 M7 4.5 L8.5 4.5 M10.5 4.5 L13 4.5 M8 5.5 L11.5 5.5" fill="none" stroke="#000" stroke-width="1"/></svg>
<div class="cb" style="left:6px;top:335px;background:#e6e4da"></div>
<div class="t" style="left:23px;top:334px;color:#aca899"><span style="letter-spacing:6px">供应商</span></div>
<div class="f lb" style="left:79px;top:331px;width:146px;height:22px;">宏鑫五金</div>
<div class="dd " style="left:206px;top:333px;width:17px;height:18px"></div>
<svg class="a" style="left:228px;top:338px" width="17" height="9" viewBox="0 0 17 9"><rect x="0" y="0" width="2" height="8" fill="#000"/><rect x="2" y="1" width="2" height="7" fill="#000"/><rect x="2" y="2" width="1" height="3" fill="#00e0f0"/><rect x="2" y="5" width="1" height="2" fill="#f4e8e8"/><path d="M4.5 1.5 L5.5 0.5 L12.5 0.5 L13.5 1.5 L15.5 2.5 L15.5 3.2 L13 4.5 L11.5 5.5 L10.5 6.5 L9.5 7.5 L4.5 7.5 Z" fill="#fff" stroke="#000" stroke-width="1"/><path d="M7 2.5 L8.5 2.5 M8 3.5 L14.5 3.5 M7 4.5 L8.5 4.5 M10.5 4.5 L13 4.5 M8 5.5 L11.5 5.5" fill="none" stroke="#000" stroke-width="1"/></svg>
<svg class="a" style="left:8px;top:337px" width="9" height="9" viewBox="0 0 9 9"><path d="M1 4 L3.5 6.5 L8 1.5" fill="none" stroke="#aca899" stroke-width="1.8"/></svg>
<div class="t" style="left:80px;top:360px;color:#0000ff;text-decoration:underline">宏鑫五金</div>
<div class="cb" style="left:6px;top:388px;"></div>
<div class="t" style="left:23px;top:387px;color:#800080">操作仓库</div>
<div class="f lb" style="left:79px;top:384px;width:146px;height:22px;">五金仓</div>
<div class="dd " style="left:206px;top:386px;width:17px;height:18px"></div>
<svg class="a" style="left:228px;top:391px" width="17" height="9" viewBox="0 0 17 9"><rect x="0" y="0" width="2" height="8" fill="#000"/><rect x="2" y="1" width="2" height="7" fill="#000"/><rect x="2" y="2" width="1" height="3" fill="#00e0f0"/><rect x="2" y="5" width="1" height="2" fill="#f4e8e8"/><path d="M4.5 1.5 L5.5 0.5 L12.5 0.5 L13.5 1.5 L15.5 2.5 L15.5 3.2 L13 4.5 L11.5 5.5 L10.5 6.5 L9.5 7.5 L4.5 7.5 Z" fill="#fff" stroke="#000" stroke-width="1"/><path d="M7 2.5 L8.5 2.5 M8 3.5 L14.5 3.5 M7 4.5 L8.5 4.5 M10.5 4.5 L13 4.5 M8 5.5 L11.5 5.5" fill="none" stroke="#000" stroke-width="1"/></svg>
<div class="cb" style="left:6px;top:415px;"></div>
<div class="t" style="left:23px;top:414px;color:#800000"><span style="letter-spacing:24px">车间</span></div>
<div class="f lb" style="left:79px;top:411px;width:146px;height:22px;"></div>
<div class="dd " style="left:206px;top:413px;width:17px;height:18px"></div>
<svg class="a" style="left:228px;top:418px" width="17" height="9" viewBox="0 0 17 9"><rect x="0" y="0" width="2" height="8" fill="#000"/><rect x="2" y="1" width="2" height="7" fill="#000"/><rect x="2" y="2" width="1" height="3" fill="#00e0f0"/><rect x="2" y="5" width="1" height="2" fill="#f4e8e8"/><path d="M4.5 1.5 L5.5 0.5 L12.5 0.5 L13.5 1.5 L15.5 2.5 L15.5 3.2 L13 4.5 L11.5 5.5 L10.5 6.5 L9.5 7.5 L4.5 7.5 Z" fill="#fff" stroke="#000" stroke-width="1"/><path d="M7 2.5 L8.5 2.5 M8 3.5 L14.5 3.5 M7 4.5 L8.5 4.5 M10.5 4.5 L13 4.5 M8 5.5 L11.5 5.5" fill="none" stroke="#000" stroke-width="1"/></svg>
<div class="cb" style="left:6px;top:445px;"></div>
<div class="t" style="left:23px;top:444px;color:#800080">明细备注</div>
<div class="f " style="left:79px;top:441px;width:165px;height:21px;"></div>
<div class="a" style="left:247px;top:72px;width:3px;height:420px;background:#0000ff;"></div>
<div class="a" style="left:250px;top:72px;width:637px;height:420px;background:#fff;"></div>
<div class="a" style="left:250px;top:72px;width:637px;height:44px;background:#9fcf9f;"></div>
<div class="g gp" style="left:251px;top:73px;width:49px;height:21px;padding-top:4px;"><span class="dash"></span></div>
<div class="g gh" style="left:300px;top:73px;width:120px;height:21px;padding-top:4px;background:#dbece6">单据编号</div>
<div class="g gh" style="left:420px;top:73px;width:80px;height:21px;padding-top:4px;background:#dbece6">单据日期</div>
<div class="g gh" style="left:500px;top:73px;width:60px;height:21px;padding-top:4px;background:#dbece6">单据状态</div>
<div class="g gh" style="left:560px;top:73px;width:100px;height:21px;padding-top:4px;background:#dbece6">备注信息</div>
<div class="g gh" style="left:660px;top:73px;width:60px;height:21px;padding-top:4px;background:#dbece6">打印次数</div>
<div class="g gh" style="left:720px;top:73px;width:100px;height:21px;padding-top:4px;background:#dbece6">企业名称</div>
<div class="g gh" style="left:820px;top:73px;width:80px;height:21px;padding-top:4px;background:#dbece6">单据金额</div>
<div class="g " style="left:251px;top:94px;width:49px;height:22px;padding-top:4px;background:#dcece6;text-align:center;color:#06067c">1</div>
<div class="g " style="left:300px;top:94px;width:120px;height:22px;padding:4px 0 0 4px;background:#c6fce2">AA-15-04-03-0002</div>
<div class="g " style="left:420px;top:94px;width:80px;height:22px;padding:4px 0 0 4px;background:#5566e6;color:#fff">2015-04-03</div>
<div class="g " style="left:500px;top:94px;width:60px;height:22px;padding:4px 0 0 4px;background:#c6fce2">已完成</div>
<div class="g " style="left:560px;top:94px;width:100px;height:22px;padding:4px 0 0 4px;background:#c6fce2"></div>
<div class="g " style="left:660px;top:94px;width:60px;height:22px;padding:4px 0 0 4px;background:#c6fce2"></div>
<div class="g " style="left:720px;top:94px;width:100px;height:22px;padding:4px 0 0 4px;background:#c6fce2">宏鑫五金</div>
<div class="g " style="left:820px;top:94px;width:80px;height:22px;padding:4px 0 0 50px;background:#c6fce2">416</div>
<div class="t red" style="left:254px;top:171px">采购订单单据手动设置完成标志后，还是被下级单据引用，能否在上级单据</div>
<div class="t red" style="left:254px;top:195px">设置完成标示后（不管是自动（引用流程定义下级单据引用完成做为上级完</div>
<div class="t red" style="left:254px;top:220px">成依据）或是手动），都不被下级单据引用？在单据引用界面里<span class="hy">-</span>点右键<span class="hy">-</span><span class="hy">-</span></div>
<div class="t red" style="left:256px;top:244px">设置单据引用完成，新增单据时，没有显示引用单据，这样是可行的，但是</div>
<div class="t red" style="left:256px;top:269px">有时一个上级单据被多种单据引用，都要在单据引用界面来设置引用完成才</div>
<div class="t red" style="left:256px;top:293px">不被引用有点麻烦，是否可以在源头的单据设置完成，下级单据就不引用了</div>
<div class="t red" style="left:256px;top:318px">呃？</div>
<div class="a" style="left:250px;top:343px;width:637px;height:17px;background:linear-gradient(#eeede5,#f6f5f0 40%,#fefefb);"></div>
<svg class="a" style="left:250px;top:343px" width="17" height="17" viewBox="0 0 17 17"><defs><linearGradient id="sg" x1="0" y1="0" x2="1" y2="1"><stop offset="0" stop-color="#cddafd"/><stop offset="1" stop-color="#b4c6f5"/></linearGradient></defs><rect x="0.5" y="0.5" width="16" height="16" rx="2.5" fill="url(#sg)" stroke="#fff" stroke-width="1"/><path d="M2 16.5 L15 16.5" stroke="#a0b5ee" stroke-width="1"/><path d="M10.0 4.5 L6.0 8.5 L10.0 12.5" fill="none" stroke="#4d6185" stroke-width="2.2"/></svg>
<svg class="a" style="left:267px;top:343px" width="18" height="17" viewBox="0 0 18 17"><defs><linearGradient id="sg" x1="0" y1="0" x2="1" y2="1"><stop offset="0" stop-color="#cddafd"/><stop offset="1" stop-color="#b4c6f5"/></linearGradient></defs><rect x="0.5" y="0.5" width="17" height="16" rx="2.5" fill="url(#sg)" stroke="#fff" stroke-width="1"/><path d="M2 16.5 L16 16.5" stroke="#a0b5ee" stroke-width="1"/><rect x="5.0" y="5.5" width="1" height="6" fill="#f4f8ff"/><rect x="6.0" y="6.0" width="1" height="6" fill="#7c9eec"/><rect x="7.0" y="5.5" width="1" height="6" fill="#f4f8ff"/><rect x="8.0" y="6.0" width="1" height="6" fill="#7c9eec"/><rect x="9.0" y="5.5" width="1" height="6" fill="#f4f8ff"/><rect x="10.0" y="6.0" width="1" height="6" fill="#7c9eec"/><rect x="11.0" y="5.5" width="1" height="6" fill="#f4f8ff"/><rect x="12.0" y="6.0" width="1" height="6" fill="#7c9eec"/></svg>
<svg class="a" style="left:871px;top:343px" width="17" height="17" viewBox="0 0 17 17"><defs><linearGradient id="sg" x1="0" y1="0" x2="1" y2="1"><stop offset="0" stop-color="#cddafd"/><stop offset="1" stop-color="#b4c6f5"/></linearGradient></defs><rect x="0.5" y="0.5" width="16" height="16" rx="2.5" fill="url(#sg)" stroke="#fff" stroke-width="1"/><path d="M2 16.5 L15 16.5" stroke="#a0b5ee" stroke-width="1"/><path d="M7.0 4.5 L11.0 8.5 L7.0 12.5" fill="none" stroke="#4d6185" stroke-width="2.2"/></svg>
<div class="a" style="left:250px;top:360px;width:637px;height:1px;background:#cdbfa0;"></div>
<div class="a" style="left:250px;top:361px;width:637px;height:1px;background:#a9c9f3;"></div>
<div class="a" style="left:250px;top:363px;width:634px;height:88px;background:#9fcf9f;"></div>
<div class="g gp" style="left:251px;top:364px;width:49px;height:21px;padding-top:4px;"><span class="dash"></span></div>
<div class="g gh" style="left:300px;top:364px;width:34px;height:21px;padding-top:4px;background:#dbece6">标志</div>
<div class="g gh" style="left:334px;top:364px;width:130px;height:21px;padding-top:4px;background:#dbece6">名称</div>
<div class="g gh" style="left:464px;top:364px;width:90px;height:21px;padding-top:4px;background:#dbece6">产品代码</div>
<div class="g gh" style="left:554px;top:364px;width:40px;height:21px;padding-top:4px;background:#dbece6">单位</div>
<div class="g gh" style="left:594px;top:364px;width:60px;height:21px;padding-top:4px;background:#dbece6">数量</div>
<div class="g gh" style="left:654px;top:364px;width:60px;height:21px;padding-top:4px;background:#dbece6">已引量</div>
<div class="g gh" style="left:714px;top:364px;width:60px;height:21px;padding-top:4px;background:#dbece6">剩余量</div>
<div class="g gh" style="left:774px;top:364px;width:60px;height:21px;padding-top:4px;background:#dbece6">本次引</div>
<div class="g gh" style="left:834px;top:364px;width:50px;height:21px;padding-top:4px;background:#dbece6;text-align:left;padding-left:6px">批次编</div>
<div class="g " style="left:251px;top:385px;width:49px;height:22px;padding-top:4px;background:#dcece6;text-align:center;color:#06067c">1</div>
<div class="g " style="left:300px;top:385px;width:34px;height:22px;padding:4px 0 0 4px;background:#eef5ea"></div>
<div class="g " style="left:334px;top:385px;width:130px;height:22px;padding:4px 0 0 4px;background:#eef5ea">1010J马钉（白色）</div>
<div class="g " style="left:464px;top:385px;width:90px;height:22px;padding:4px 0 0 4px;background:#eef5ea">WJ00004</div>
<div class="g " style="left:554px;top:385px;width:40px;height:22px;padding:4px 0 0 4px;background:#eef5ea">盒</div>
<div class="g " style="left:594px;top:385px;width:60px;height:22px;padding:4px 0 0 4px;background:#eef5ea">250</div>
<div class="g " style="left:654px;top:385px;width:60px;height:22px;padding:4px 0 0 4px;background:#eef5ea">239</div>
<div class="g " style="left:714px;top:385px;width:60px;height:22px;padding:4px 0 0 4px;background:#eef5ea">11</div>
<div class="g " style="left:774px;top:385px;width:60px;height:22px;background:#fff"></div>
<div class="g " style="left:834px;top:385px;width:50px;height:22px;padding:4px 0 0 4px;background:#fff">-</div>
<div class="g " style="left:251px;top:407px;width:49px;height:22px;padding-top:4px;background:#dcece6;text-align:center;color:#06067c">2</div>
<div class="g " style="left:300px;top:407px;width:34px;height:22px;padding:4px 0 0 4px;background:#eef5ea"></div>
<div class="g " style="left:334px;top:407px;width:130px;height:22px;padding:4px 0 0 4px;background:#eef5ea">1013马钉</div>
<div class="g " style="left:464px;top:407px;width:90px;height:22px;padding:4px 0 0 4px;background:#eef5ea">WJ00005</div>
<div class="g " style="left:554px;top:407px;width:40px;height:22px;padding:4px 0 0 4px;background:#eef5ea">盒</div>
<div class="g " style="left:594px;top:407px;width:60px;height:22px;padding:4px 0 0 4px;background:#eef5ea">300</div>
<div class="g " style="left:654px;top:407px;width:60px;height:22px;padding:4px 0 0 4px;background:#eef5ea">298</div>
<div class="g " style="left:714px;top:407px;width:60px;height:22px;padding:4px 0 0 4px;background:#eef5ea">2</div>
<div class="g " style="left:774px;top:407px;width:60px;height:22px;background:#f4fbfe"></div>
<div class="g " style="left:834px;top:407px;width:50px;height:22px;padding:4px 0 0 4px;background:#f4fbfe">-</div>
<div class="g " style="left:251px;top:429px;width:49px;height:22px;padding-top:4px;background:#dcece6;text-align:center;color:#06067c">3</div>
<div class="g " style="left:300px;top:429px;width:34px;height:22px;padding:4px 0 0 4px;background:#eef5ea"></div>
<div class="g " style="left:334px;top:429px;width:130px;height:22px;padding:4px 0 0 4px;background:#eef5ea">1006J马钉</div>
<div class="g " style="left:464px;top:429px;width:90px;height:22px;padding:4px 0 0 4px;background:#eef5ea">WJ00001</div>
<div class="g " style="left:554px;top:429px;width:40px;height:22px;padding:4px 0 0 4px;background:#eef5ea">盒</div>
<div class="g " style="left:594px;top:429px;width:60px;height:22px;padding:4px 0 0 4px;background:#eef5ea">300</div>
<div class="g " style="left:654px;top:429px;width:60px;height:22px;padding:4px 0 0 4px;background:#eef5ea">298</div>
<div class="g " style="left:714px;top:429px;width:60px;height:22px;padding:4px 0 0 4px;background:#eef5ea">2</div>
<div class="g " style="left:774px;top:429px;width:60px;height:22px;background:#fff"></div>
<div class="g " style="left:834px;top:429px;width:50px;height:22px;padding:4px 0 0 4px;background:#fff">-</div>
<div class="a" style="left:872px;top:362px;width:15px;height:130px;background:linear-gradient(90deg,#efeee7,#f8f7f3 50%,#fefefc);"></div>
<svg class="a" style="left:871px;top:362px" width="17" height="18" viewBox="0 0 17 18"><defs><linearGradient id="sg" x1="0" y1="0" x2="1" y2="1"><stop offset="0" stop-color="#cddafd"/><stop offset="1" stop-color="#b4c6f5"/></linearGradient></defs><rect x="0.5" y="0.5" width="16" height="17" rx="2.5" fill="url(#sg)" stroke="#fff" stroke-width="1"/><path d="M2 17.5 L15 17.5" stroke="#a0b5ee" stroke-width="1"/><path d="M4.5 10.5 L8.5 6.5 L12.5 10.5" fill="none" stroke="#4d6185" stroke-width="2.2"/></svg>
<svg class="a" style="left:871px;top:379px" width="17" height="18" viewBox="0 0 17 18"><defs><linearGradient id="sg" x1="0" y1="0" x2="1" y2="1"><stop offset="0" stop-color="#cddafd"/><stop offset="1" stop-color="#b4c6f5"/></linearGradient></defs><rect x="0.5" y="0.5" width="16" height="17" rx="2.5" fill="url(#sg)" stroke="#fff" stroke-width="1"/><path d="M2 17.5 L15 17.5" stroke="#a0b5ee" stroke-width="1"/><rect x="5.5" y="5.0" width="6" height="1" fill="#f4f8ff"/><rect x="6.0" y="6.0" width="6" height="1" fill="#7c9eec"/><rect x="5.5" y="7.0" width="6" height="1" fill="#f4f8ff"/><rect x="6.0" y="8.0" width="6" height="1" fill="#7c9eec"/><rect x="5.5" y="9.0" width="6" height="1" fill="#f4f8ff"/><rect x="6.0" y="10.0" width="6" height="1" fill="#7c9eec"/><rect x="5.5" y="11.0" width="6" height="1" fill="#f4f8ff"/><rect x="6.0" y="12.0" width="6" height="1" fill="#7c9eec"/></svg>
<svg class="a" style="left:715px;top:333px" width="28" height="130" viewBox="0 0 28 130"><ellipse cx="13.5" cy="64" rx="11.5" ry="62" fill="none" stroke="#e83030" stroke-width="1"/></svg>
</div>
</body></html>
